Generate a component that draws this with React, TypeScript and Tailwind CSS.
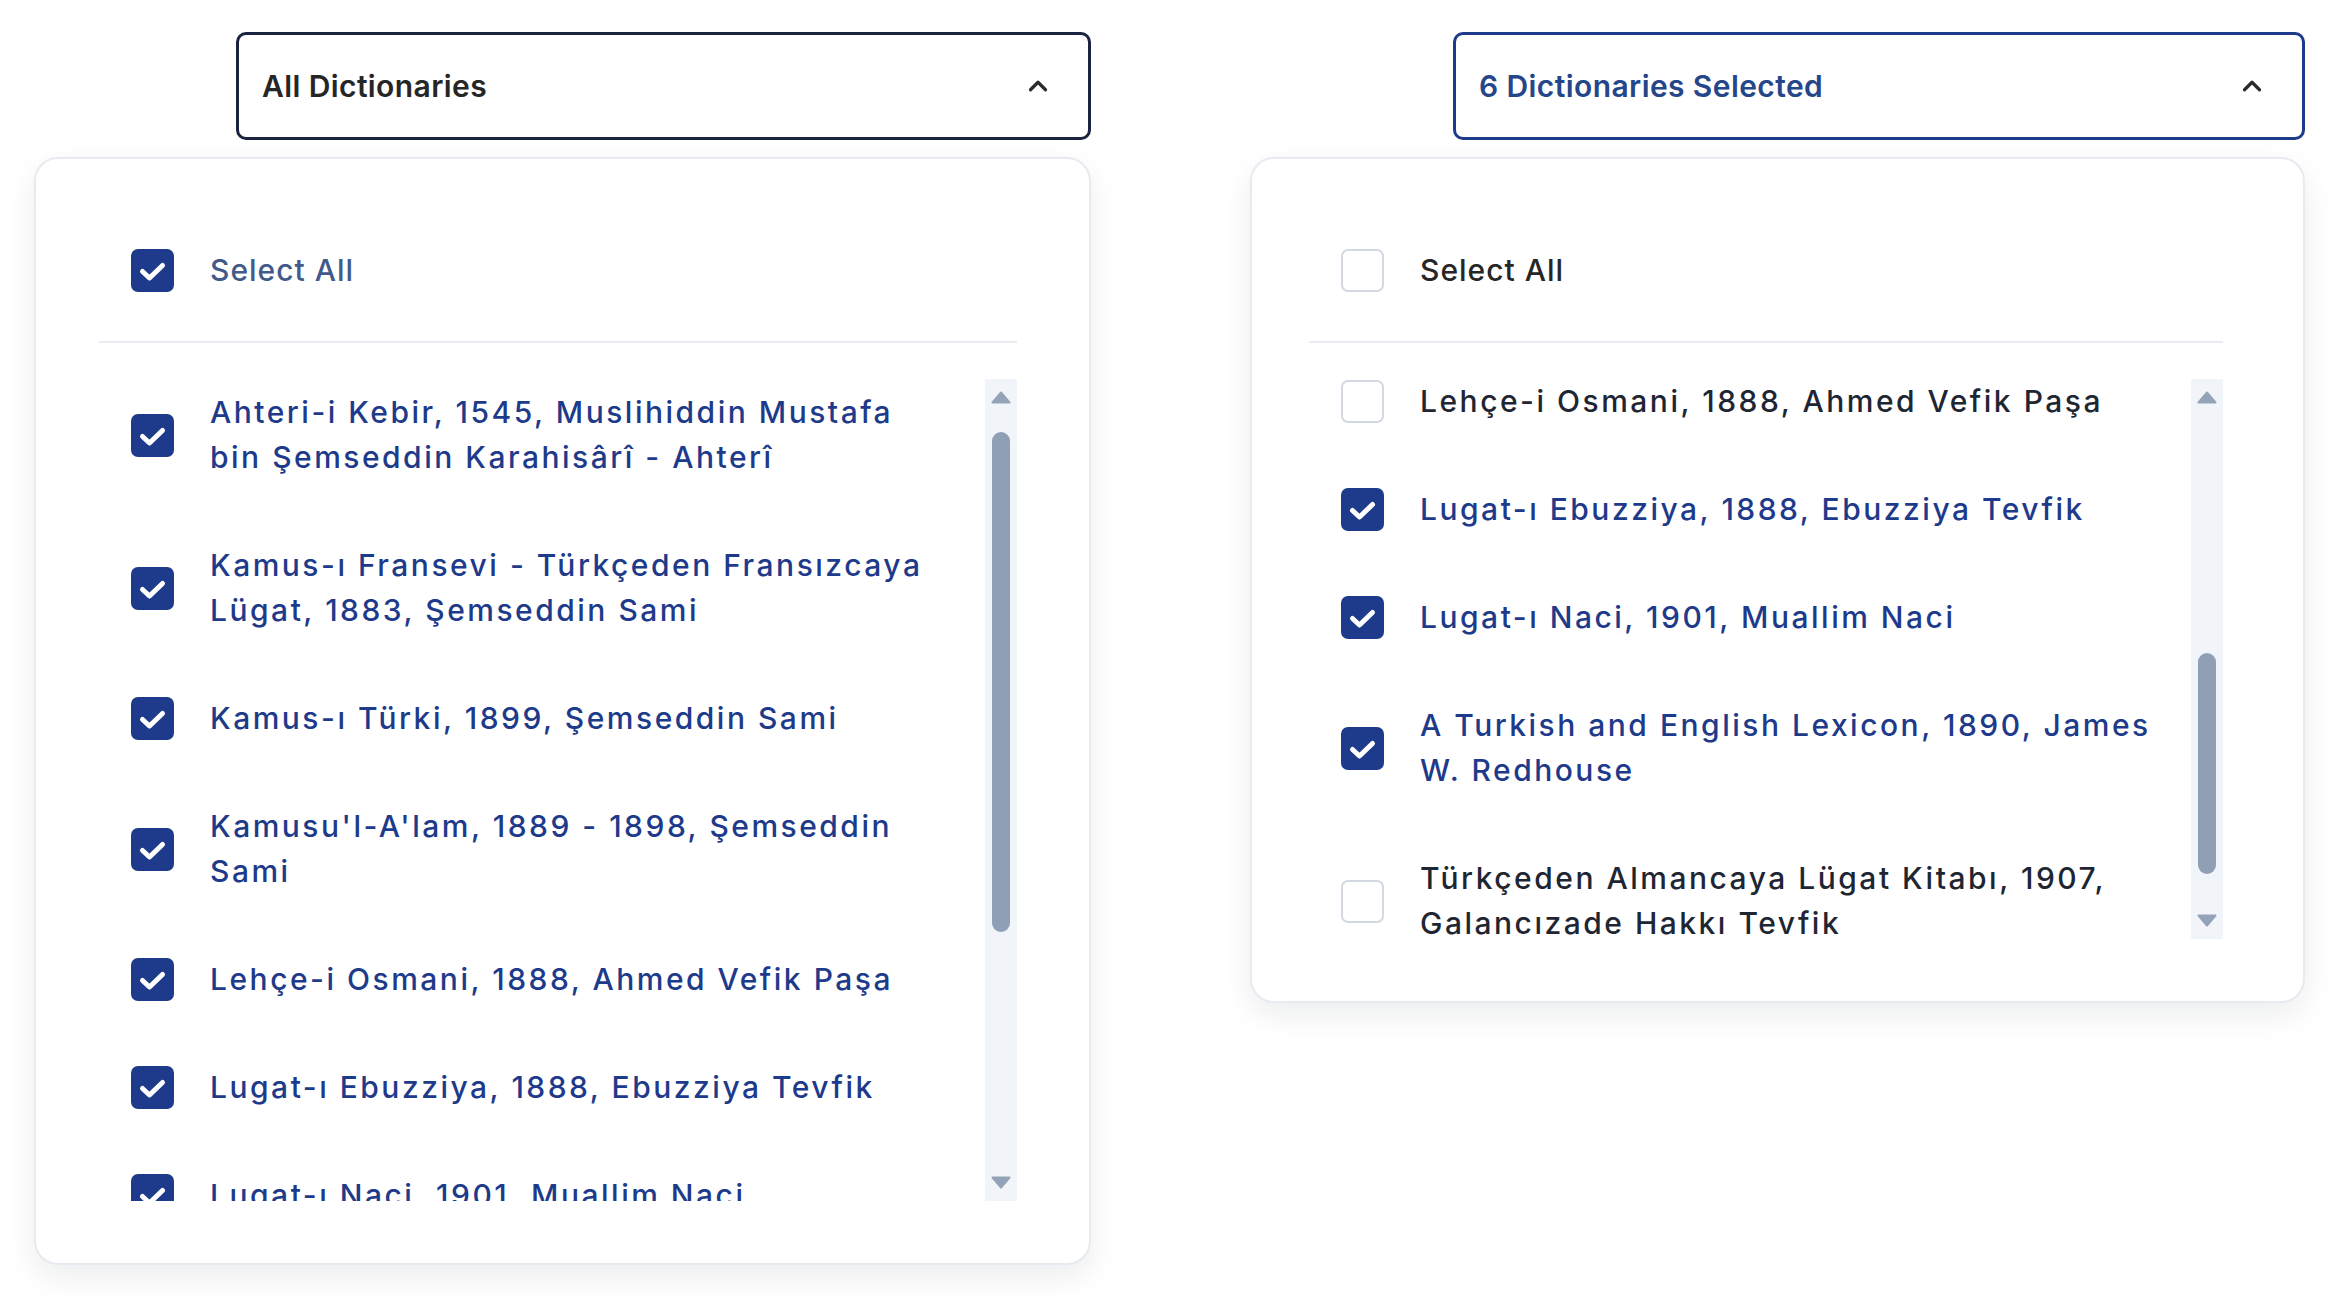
import { useLayoutEffect, useRef } from 'react'
import { ChevronUp } from 'lucide-react'

const dictionaries = [
    'Ahteri-i Kebir, 1545, Muslihiddin Mustafa bin Şemseddin Karahisârî - Ahterî',
    'Kamus-ı Fransevi - Türkçeden Fransızcaya Lügat, 1883, Şemseddin Sami',
    'Kamus-ı Türki, 1899, Şemseddin Sami',
    "Kamusu'l-A'lam, 1889 - 1898, Şemseddin Sami",
    'Lehçe-i Osmani, 1888, Ahmed Vefik Paşa',
    'Lugat-ı Ebuzziya, 1888, Ebuzziya Tevfik',
    'Lugat-ı Naci, 1901, Muallim Naci',
    'A Turkish and English Lexicon, 1890, James W. Redhouse',
    'Türkçeden Almancaya Lügat Kitabı, 1907, Galancızade Hakkı Tevfik',
]

const allChecked = dictionaries.map(() => true)
const someChecked = [true, true, true, false, false, true, true, true, false]

function Checkbox({ checked }: { checked: boolean }) {
    if (!checked) {
        return <span className="h-[43px] w-[43px] flex-shrink-0 rounded-[7px] border-[2.5px] border-[#d3d9e2] bg-white" />
    }
    return (
        <span className="h-[43px] w-[43px] flex-shrink-0 rounded-[7px] bg-[#1e3a8a] flex items-center justify-center">
            <svg width="43" height="43" viewBox="0 0 43 43" fill="none">
                <path d="M11.5 22.5 L18.5 29 L31.5 16.5" stroke="white" strokeWidth="5" strokeLinecap="round" strokeLinejoin="round" />
            </svg>
        </span>
    )
}

function Scrollbar({ thumbClass }: { thumbClass: string }) {
    return (
        <div className="w-[32px] flex-shrink-0 bg-[#f1f4f8] flex flex-col items-center">
            <svg className="mt-[12px] flex-shrink-0" width="20" height="13" viewBox="0 0 20 13">
                <path d="M10 1.5 L18.5 11.5 L1.5 11.5 Z" fill="#94a3b8" stroke="#94a3b8" strokeWidth="2" strokeLinejoin="round" />
            </svg>
            <div className="flex-1 w-full flex flex-col items-center">
                <div className={`w-[18px] rounded-full bg-[#8f9fb6] ${thumbClass}`} />
            </div>
            <svg className="mb-[12px] flex-shrink-0" width="20" height="13" viewBox="0 0 20 13">
                <path d="M10 11.5 L18.5 1.5 L1.5 1.5 Z" fill="#94a3b8" stroke="#94a3b8" strokeWidth="2" strokeLinejoin="round" />
            </svg>
        </div>
    )
}

function DictionaryPanel({
    label,
    labelClass,
    buttonClass,
    checked,
    selectAll,
    selectAllClass,
    panelClass,
    listHeight,
    thumbClass,
    scrollTo,
}: {
    label: string
    labelClass: string
    buttonClass: string
    checked: boolean[]
    selectAll: boolean
    selectAllClass: string
    panelClass: string
    listHeight: string
    thumbClass: string
    scrollTo: number
}) {
    const listRef = useRef<HTMLDivElement>(null)
    const targetRef = useRef<HTMLDivElement>(null)

    useLayoutEffect(() => {
        if (scrollTo > 0 && listRef.current && targetRef.current) {
            listRef.current.scrollTop = targetRef.current.offsetTop
        }
    }, [scrollTo])

    return (
        <div className="flex flex-col items-end gap-[17px]">
            {/* trigger */}
            <button className={`h-[108px] rounded-[10px] border-[3px] bg-white flex items-center justify-between pl-[23px] pr-[35px] ${buttonClass}`}>
                <span className={`text-[30px] leading-[45px] font-semibold tracking-[0.4px] ${labelClass}`}>{label}</span>
                <ChevronUp size={30} strokeWidth={2.6} className="text-[#2b2b2b]" />
            </button>

            {/* dropdown */}
            <div className={`rounded-[24px] border-2 border-[#e7eaf0] bg-white shadow-[0_12px_30px_rgba(15,23,42,0.08)] pt-[89px] pb-[62px] ${panelClass}`}>
                <div className="flex items-center gap-[36px] pl-[32px] h-[45px]">
                    <Checkbox checked={selectAll} />
                    <span className={`text-[30px] leading-[45px] font-medium tracking-[1px] ${selectAllClass}`}>Select All</span>
                </div>
                <div className="mt-[48px] h-[2px] bg-[#e8ebf1]" />
                <div className={`mt-[36px] flex ${listHeight}`}>
                    <div ref={listRef} className="relative flex-1 overflow-hidden pl-[32px]">
                        <div className="flex flex-col gap-[63px] pt-[11px] pb-[10px]">
                            {dictionaries.map((name, i) => (
                                <div key={name} ref={i === scrollTo ? targetRef : undefined} className="flex items-center gap-[36px]">
                                    <Checkbox checked={checked[i]} />
                                    <span className={`w-[733px] text-[30px] leading-[45px] font-medium tracking-[2.5px] ${checked[i] ? 'text-[#1e3a8a]' : 'text-[#1f2633]'}`}>
                                        {name}
                                    </span>
                                </div>
                            ))}
                        </div>
                    </div>
                    <Scrollbar thumbClass={thumbClass} />
                </div>
            </div>
        </div>
    )
}

export default function App() {
    return (
        <div className="w-[2336px] h-[1300px] bg-white flex items-start gap-[159px] pl-[34px] pt-[32px]" style={{ fontFamily: 'Inter, "Noto Sans", sans-serif' }}>
            <DictionaryPanel
                label="All Dictionaries"
                labelClass="text-[#262626]"
                buttonClass="w-[855px] border-[#1a2340]"
                checked={allChecked}
                selectAll={true}
                selectAllClass="text-[#415a89]"
                panelClass="w-[1057px] pl-[63px] pr-[72px]"
                listHeight="h-[822px]"
                thumbClass="mt-[28px] h-[500px]"
                scrollTo={0}
            />
            <DictionaryPanel
                label="6 Dictionaries Selected"
                labelClass="text-[#26468a]"
                buttonClass="w-[852px] border-[#1e3a8a]"
                checked={someChecked}
                selectAll={false}
                selectAllClass="text-[#262626]"
                panelClass="w-[1055px] pl-[57px] pr-[80px]"
                listHeight="h-[560px]"
                thumbClass="mt-[249px] h-[221px]"
                scrollTo={4}
            />
        </div>
    )
}
